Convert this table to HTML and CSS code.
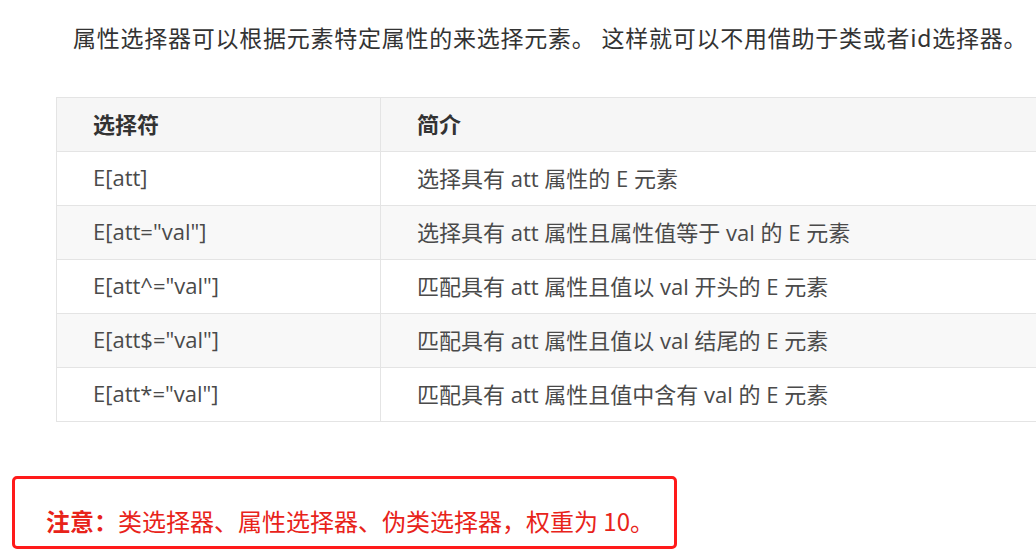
FILE: index.html
```html
<!DOCTYPE html>
<html lang="zh-CN">
<head>
<meta charset="utf-8">
<title>属性选择器</title>
<link rel="stylesheet" href="styles.css">
</head>
<body>
<div class="page">
  <p class="intro">属性选择器可以根据元素特定属性的来选择元素。 这样就可以不用借助于类或者id选择器。</p>
  <table class="sel-table">
    <thead>
      <tr><th class="c1">选择符</th><th class="c2">简介</th></tr>
    </thead>
    <tbody>
      <tr><td>E[att]</td><td>选择具有 att 属性的 E 元素</td></tr>
      <tr><td>E[att="val"]</td><td>选择具有 att 属性且属性值等于 val 的 E 元素</td></tr>
      <tr><td>E[att^="val"]</td><td>匹配具有 att 属性且值以 val 开头的 E 元素</td></tr>
      <tr><td>E[att$="val"]</td><td>匹配具有 att 属性且值以 val 结尾的 E 元素</td></tr>
      <tr><td>E[att*="val"]</td><td>匹配具有 att 属性且值中含有 val 的 E 元素</td></tr>
    </tbody>
  </table>
  <div class="note"><span class="note-label">注意：</span>类选择器、属性选择器、伪类选择器，权重为 10。</div>
</div>
</body>
</html>
```

FILE: styles.css
```css
html, body {
  margin: 0;
  padding: 0;
  background: #ffffff;
  overflow: hidden;
}
.page {
  width: 1036px;
  height: 551px;
  overflow: hidden;
  font-family: "Open Sans", "Noto Sans CJK SC", sans-serif;
}
.intro {
  margin: 0;
  padding: 22px 0 0 73px;
  font-family: "Noto Sans CJK SC", sans-serif;
  font-size: 23px;
  line-height: 30px;
  color: #333333;
  white-space: nowrap;
  letter-spacing: 0.75px;
}
.sel-table {
  margin: 45px 0 0 56px;
  width: 1040px;
  border-collapse: collapse;
  font-size: 22px;
  color: #4a4a4a;
}
.sel-table th,
.sel-table td {
  border: 1px solid #e4e4e4;
  height: 49px;
  padding: 0 0 4px 36px;
  text-align: left;
  vertical-align: middle;
  font-family: "Open Sans", "Noto Sans CJK SC", sans-serif;
  white-space: nowrap;
}
.sel-table th {
  font-weight: 700;
  color: #333333;
  background: #f6f6f6;
  font-family: "Noto Sans CJK SC", sans-serif;
}
.sel-table .c1 {
  width: 287px;
}
.sel-table tbody tr:nth-child(even) td {
  background: #f8f8f8;
}
.note {
  margin: 54px 0 0 12px;
  box-sizing: border-box;
  width: 665px;
  height: 73px;
  border: 3px solid #ff1a1a;
  border-radius: 5px;
  padding: 27px 0 0 31px;
  font-family: "Noto Sans CJK SC", sans-serif;
  font-size: 24px;
  line-height: 30px;
  color: #e8231a;
  white-space: nowrap;
}
.note-label {
  font-weight: 700;
}
```
